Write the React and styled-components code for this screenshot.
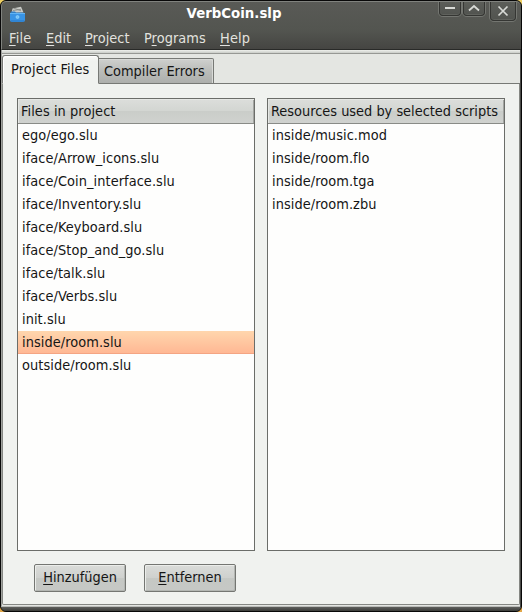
import React from "react";
import styled, { createGlobalStyle } from "styled-components";

const GlobalStyle = createGlobalStyle`
  *, *::before, *::after { box-sizing: border-box; }
  html, body { margin: 0; padding: 0; overflow: hidden; }
  body { background: linear-gradient(#eecf62, #e0a648); }
`;

const Window = styled.div`
  width: 522px;
  height: 612px;
  display: flex;
  flex-direction: column;
  overflow: hidden;
  border: 1px solid #080808;
  border-radius: 6px;
  background: #484946;
  font-family: "DejaVu Sans Condensed", "DejaVu Sans", sans-serif;
  font-stretch: condensed;
  font-size: 14.4px;
  line-height: 17px;
  color: #151515;
  white-space: pre;
`;

const Chrome = styled.header`
  flex: none;
  height: 49px;
  background: linear-gradient(#595a56, #535550 60%, #454542);
  border-top: 1px solid #80827e;
  border-left: 1px solid #80827e;
  border-bottom: 1px solid #292a28;
  border-radius: 5px 5px 0 0;
`;

const TitleBar = styled.div`
  height: 26px;
  display: grid;
  grid-template-columns: 82px 1fr 82px;
`;

const AppIcon = styled.svg`
  width: 17px;
  height: 17px;
  margin: 4px 0 0 7px;
`;

const Title = styled.h1`
  margin: 3px 0 0;
  padding-right: 79px;
  padding-left: 24px;
  text-align: center;
  color: #fff;
  font-family: "DejaVu Sans", sans-serif;
  font-stretch: normal;
  font-size: 13.33px;
  line-height: 17px;
  font-weight: bold;
`;

const Controls = styled.div`
  display: flex;
  align-items: flex-start;
`;

const Control = styled.button`
  width: ${(p) => (p.$close ? 26 : 22)}px;
  height: ${(p) => (p.$close ? 19 : 14)}px;
  margin: 0 ${(p) => p.$gap || 0}px 0 0;
  padding: 0;
  flex: none;
  border: 1px solid #353633;
  border-top: 0;
  border-radius: 0 0 4px 4px;
  background: linear-gradient(#5c5e59, #51534f);
  box-shadow: 0 1px 0 #747671, 1px 0 0 #747671, -1px 0 0 #747671, inset 0 -1px 0 #60625d;
  svg { display: block; width: 100%; height: 100%; }
`;

const MenuBar = styled.nav`
  display: flex;
  gap: 14px;
  padding: 2px 0 0 7px;
  color: #e2e2df;
`;

const MenuItem = styled.span`
  width: ${(p) => p.$w}px;
  letter-spacing: ${(p) => p.$ls}px;
`;

const Mnemonic = styled.span`
  text-decoration: underline;
  text-decoration-thickness: 1px;
  text-underline-offset: 2px;
  text-decoration-skip-ink: none;
`;

const Client = styled.main`
  flex: none;
  height: 557px;
  margin-right: 1px;
  display: flex;
  flex-direction: column;
  background: #e4e6e2;
  border-left: 1px solid #a0a29e;
  border-bottom: 1px solid #b9bbb8;
`;

const Strip = styled.div`
  height: 4px;
  flex: none;
  background: linear-gradient(#eff1ed, #c9ccc7);
  border-bottom: 1px solid #969894;
`;

const Tabs = styled.div`
  flex: none;
  height: 30px;
  display: flex;
  align-items: flex-end;
  border-bottom: 1px solid #777975;
`;

const Tab = styled.div`
  width: ${(p) => (p.$active ? 97 : 115)}px;
  height: ${(p) => (p.$active ? 29 : 26)}px;
  margin-bottom: -1px;
  padding: ${(p) => (p.$active ? "5px 0 0 8px" : "4px 0 0 5px")};
  border: 1px solid #777975;
  border-bottom-color: ${(p) => (p.$active ? "#f0f2ef" : "#777975")};
  border-left-width: ${(p) => (p.$active ? 1 : 0)}px;
  border-radius: ${(p) => (p.$active ? "3px 3px 0 0" : "0 2px 0 0")};
  background: ${(p) => (p.$active ? "linear-gradient(#fafbf9, #f0f2ef 5px)" : "linear-gradient(#cfd0ce, #bcbebb 45%, #adafac)")};
  box-shadow: ${(p) => (p.$active ? "inset 1px 1px 0 #fff" : "inset -1px 1px 0 #d8dad7")};
  letter-spacing: ${(p) => (p.$active ? 0.14 : 0)}px;
`;

const Pane = styled.section`
  height: 521px;
  flex: none;
  padding: 14px 0 0 14px;
  background: #f0f2ef;
  border: solid #858783;
  border-width: 0 1px 1px 1px;
  border-radius: 0 0 2px 2px;
`;

const Lists = styled.div`
  display: flex;
  gap: 12px;
`;

const List = styled.div`
  width: 238px;
  height: 453px;
  flex: none;
  border: 1px solid #6b6d69;
  background: #fefefd;
`;

const ListHeader = styled.div`
  height: 25px;
  padding: 4px 0 0 3px;
  border-bottom: 1px solid #898b87;
  background: linear-gradient(#dcdedb, #d3d6d2 48%, #cacdc9 52%, #d0d2cf);
  box-shadow: inset 1px 1px 0 #e6e8e5, inset -1px 0 0 #a3a5a1;
  letter-spacing: ${(p) => p.$ls}px;
`;

const Row = styled.div`
  height: 23px;
  padding: 3px 0 0 4px;
  background: ${(p) => (p.$selected ? "linear-gradient(#ffd6ad, #ffb894 95%, #f4a583 96%)" : "none")};
  letter-spacing: 0.07px;
`;

const Actions = styled.div`
  display: flex;
  gap: 18px;
  padding: 13px 0 0 17px;
`;

const Button = styled.button`
  width: 92px;
  height: 28px;
  padding: 0 0 1px;
  border: 1px solid #747672;
  border-radius: 2px;
  background: linear-gradient(#dadcd9, #cfd1ce 48%, #c5c8c4 52%, #c6c8c5);
  box-shadow: inset 1px 1px 0 #ebedea, inset -1px -1px 0 #b3b6b2;
  color: inherit;
  font: inherit;
`;

const BottomFrame = styled.footer`
  height: 4px;
  flex: none;
  background: linear-gradient(#60615e, #3c3d3a);
`;

const menus = [
  ["", "F", "ile", 23, 0.25],
  ["", "E", "dit", 25, 0],
  ["", "P", "roject", 45, 0.05],
  ["P", "r", "ograms", 62, 0.05],
  ["", "H", "elp", 32, 0.15],
];

const files = [
  "ego/ego.slu",
  "iface/Arrow_icons.slu",
  "iface/Coin_interface.slu",
  "iface/Inventory.slu",
  "iface/Keyboard.slu",
  "iface/Stop_and_go.slu",
  "iface/talk.slu",
  "iface/Verbs.slu",
  "init.slu",
  "inside/room.slu",
  "outside/room.slu",
];

const resources = ["inside/music.mod", "inside/room.flo", "inside/room.tga", "inside/room.zbu"];

function FileList({ title, spacing, items, selected }) {
  return (
    <List>
      <ListHeader $ls={spacing}>{title}</ListHeader>
      {items.map((name) => (
        <Row key={name} $selected={name === selected}>{name}</Row>
      ))}
    </List>
  );
}

export default function App() {
  return (
    <>
      <GlobalStyle />
      <Window>
        <Chrome>
          <TitleBar>
            <AppIcon viewBox="0 0 17 17">
              <path d="M2.5 7 3.5 2.5 12 .8l2.5 5.7z" fill="#c9cbc7" />
              <path d="M4 4.5 12 3.3M5 2.2l7 2.6" stroke="#81847f" strokeWidth=".8" />
              <path d="M2 5.5h4l1 1h7l1 1.5H1z" fill="#327fc5" />
              <path d="M1 7h15v7q0 2-2 2H3q-2 0-2-2z" fill="#3994e5" />
              <path d="M1 7.5h15" stroke="#62b4f4" />
              <path d="M2 15h13" stroke="#2876c2" />
              <circle cx="8.5" cy="11" r="1.5" fill="#72c4fa" stroke="#a4dcff" strokeWidth=".6" />
            </AppIcon>
            <Title>VerbCoin.slp</Title>
            <Controls>
              <Control $gap={2} aria-label="Minimize">
                <svg viewBox="0 0 20 13"><path d="M5 6h10" stroke="#d8dad6" strokeWidth="2" /></svg>
              </Control>
              <Control $gap={5} aria-label="Maximize">
                <svg viewBox="0 0 20 13"><path d="m5 8.5 5-4.5 5 4.5" fill="none" stroke="#d8dad6" strokeWidth="1.8" /></svg>
              </Control>
              <Control $close aria-label="Close">
                <svg viewBox="0 0 24 18"><path d="m7.5 4.5 9 9m0-9-9 9" stroke="#d8dad6" strokeWidth="1.7" /></svg>
              </Control>
            </Controls>
          </TitleBar>
          <MenuBar>
            {menus.map(([pre, key, post, w, ls]) => (
              <MenuItem key={post} $w={w} $ls={ls}>{pre}<Mnemonic>{key}</Mnemonic>{post}</MenuItem>
            ))}
          </MenuBar>
        </Chrome>
        <Client>
          <Strip />
          <Tabs>
            <Tab $active>Project Files</Tab>
            <Tab>Compiler Errors</Tab>
          </Tabs>
          <Pane>
            <Lists>
              <FileList title="Files in project" spacing={0.08} items={files} selected="inside/room.slu" />
              <FileList title="Resources used by selected scripts" spacing={0} items={resources} />
            </Lists>
            <Actions>
              <Button><Mnemonic>H</Mnemonic>inzufügen</Button>
              <Button><Mnemonic>E</Mnemonic>ntfernen</Button>
            </Actions>
          </Pane>
        </Client>
        <BottomFrame />
      </Window>
    </>
  );
}
